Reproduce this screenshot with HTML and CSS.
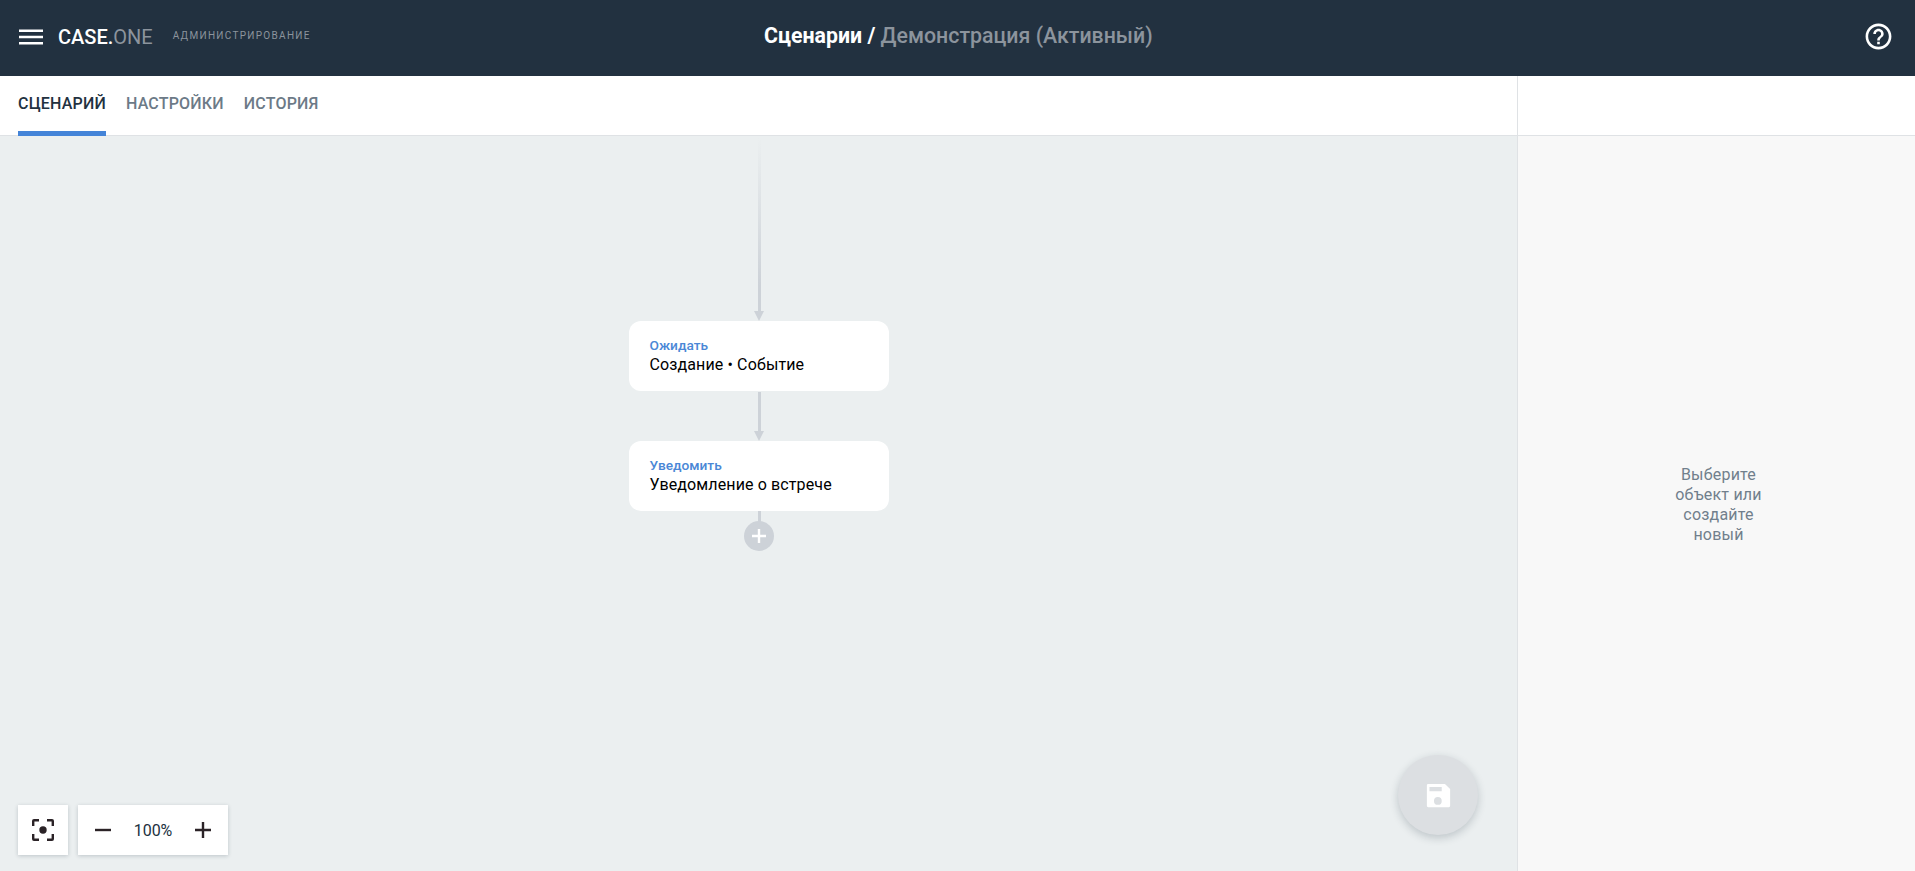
FILE: index.html
```html
<!DOCTYPE html>
<html lang="ru">
<head>
<meta charset="utf-8">
<title>CASE.ONE</title>
<link rel="stylesheet" href="styles.css">
</head>
<body>
<header class="topbar">
  <div class="brand">
    <svg class="menu-icon" viewBox="0 0 24 24" width="24" height="24"><path d="M0 4.5h24V7H0zM0 10.75h24v2.5H0zM0 17h24v2.5H0z" fill="#fff"/></svg>
    <span class="logo"><b>CASE.</b><span class="logo-one">ONE</span></span>
    <span class="logo-sub">АДМИНИСТРИРОВАНИЕ</span>
  </div>
  <h1 class="title"><b>Сценарии /</b> <span class="title-muted">Демонстрация (Активный)</span></h1>
  <svg class="help-icon" viewBox="0 0 24 24" width="31" height="31"><path fill="#fff" d="M11 18h2v-2h-2v2zm1-16C6.48 2 2 6.48 2 12s4.48 10 10 10 10-4.48 10-10S17.52 2 12 2zm0 18c-4.41 0-8-3.59-8-8s3.59-8 8-8 8 3.59 8 8-3.59 8-8 8zm0-14c-2.21 0-4 1.79-4 4h2c0-1.1.9-2 2-2s2 .9 2 2c0 2-3 1.75-3 5h2c0-2.25 3-2.5 3-5 0-2.21-1.79-4-4-4z"/></svg>
</header>
<div class="workspace">
  <main class="editor">
    <nav class="tabs">
      <a class="tab tab-active">СЦЕНАРИЙ</a>
      <a class="tab">НАСТРОЙКИ</a>
      <a class="tab">ИСТОРИЯ</a>
    </nav>
    <section class="canvas">
      <div class="line line-start"></div>
      <div class="arrow arrow-1"></div>
      <div class="node node-1">
        <div class="node-kind">Ожидать</div>
        <div class="node-name">Создание • Событие</div>
      </div>
      <div class="line line-mid"></div>
      <div class="arrow arrow-2"></div>
      <div class="node node-2">
        <div class="node-kind">Уведомить</div>
        <div class="node-name">Уведомление о встрече</div>
      </div>
      <div class="line line-end"></div>
      <div class="add-node">
        <svg viewBox="0 0 14 14" width="14" height="14"><path d="M5.8 0h2.4v5.8H14v2.4H8.200V14H5.800V8.200H0V5.800h5.800z" fill="#fff"/></svg>
      </div>
      <div class="controls">
        <button class="control control-fit">
          <svg viewBox="0 0 24 24" width="24" height="24"><path fill="#2b2327" d="M1 8V3a2 2 0 0 1 2-2h5v2.400H3.400V8zM16 1h5a2 2 0 0 1 2 2v5h-2.400V3.400H16zM1 16h2.400v4.600H8V23H3a2 2 0 0 1-2-2zM20.600 16H23v5a2 2 0 0 1-2 2h-5v-2.400h4.600z"/><circle cx="12" cy="12" r="3.700" fill="#2b2327"/></svg>
        </button>
        <div class="control control-zoom">
          <svg viewBox="0 0 16 16" width="16" height="16"><path d="M0 6.800h16v2.400H0z" fill="#2b2327"/></svg>
          <span class="zoom-value">100%</span>
          <svg viewBox="0 0 16 16" width="16" height="16"><path d="M6.800 0h2.400v6.800H16v2.400H9.200V16H6.800V9.200H0V6.800h6.800z" fill="#2b2327"/></svg>
        </div>
      </div>
      <button class="fab">
        <svg viewBox="0 0 24 24" width="31" height="31"><path fill="#fff" fill-rule="evenodd" d="M17 3H4a1 1 0 0 0-1 1v16a1 1 0 0 0 1 1h16a1 1 0 0 0 1-1V7zM5 5.500h9.500v3.300H5zM11.500 19.200a3 3 0 1 1 0-6 3 3 0 0 1 0 6z"/></svg>
      </button>
    </section>
  </main>
  <aside class="panel">
    <div class="panel-head"></div>
    <div class="panel-body"><p class="panel-hint">Выберите объект или создайте новый</p></div>
  </aside>
</div>
</body>
</html>
```
FILE: styles.css
```css
* { box-sizing: border-box; }
html, body { height: 100%; }
body {
  margin: 0;
  display: flex;
  flex-direction: column;
  height: 871px;
  overflow: hidden;
  font-family: Roboto, "Liberation Sans", sans-serif;
  color: #000;
  background: #fff;
}
.topbar {
  position: relative;
  flex: 0 0 76px;
  display: flex;
  align-items: center;
  justify-content: space-between;
  padding: 0 21px 0 19px;
  background: #223140;
  color: #fff;
}
.brand { display: flex; align-items: center; margin-bottom: 3px; }
.menu-icon { display: block; }
.logo { margin-left: 15px; font-size: 20px; line-height: 24px; }
.logo b { font-weight: 500; }
.logo-one { color: #8c949d; }
.logo-sub {
  margin-left: 20px;
  font-size: 10px;
  line-height: 14px;
  letter-spacing: 1.3px;
  color: #8c949d;
  position: relative;
  top: -1px;
}
.title {
  position: absolute;
  left: 764px;
  top: 22px;
  margin: 0;
  font-size: 21.33px;
  line-height: 28px;
  font-weight: 400;
  white-space: nowrap;
}
.title b { font-weight: 700; }
.title-muted { font-weight: 500; color: #8c949d; }
.help-icon { display: block; margin-bottom: 4px; }
.workspace { flex: 1; display: flex; min-height: 0; }
.editor { flex: 0 0 1517px; display: flex; flex-direction: column; }
.tabs {
  flex: 0 0 60px;
  min-height: 0;
  display: flex;
  gap: 20px;
  padding-left: 18px;
  background: #fff;
  border-bottom: 1px solid #dfe2e5;
}
.tab {
  display: block;
  height: 60px;
  font-size: 16px;
  line-height: 56px;
  font-weight: 500;
  letter-spacing: 0.2px;
  color: #6c7a87;
}
.tab-active { color: #223140; border-bottom: 5px solid #4484d8; }
.canvas {
  position: relative;
  flex: 1;
  background: #ebeff0;
  overflow: hidden;
}
.line { position: absolute; left: 758px; width: 3px; background: #cdd2d8; }
.line-start {
  top: 2px;
  height: 174px;
  background: linear-gradient(to bottom, rgba(205, 210, 216, 0), #cdd2d8 85%);
}
.line-mid { top: 256px; height: 40px; }
.line-end { top: 375px; height: 12px; }
.arrow {
  position: absolute;
  left: 754px;
  width: 0;
  height: 0;
  border-left: 5px solid transparent;
  border-right: 5px solid transparent;
  border-top: 10px solid #cdd2d8;
}
.arrow-1 { top: 175px; }
.arrow-2 { top: 295px; }
.node {
  position: absolute;
  left: 629px;
  width: 260px;
  height: 70px;
  padding: 15px 20.5px;
  background: #fff;
  border-radius: 12px;
}
.node-1 { top: 185px; }
.node-2 { top: 305px; }
.node-kind { font-size: 13.7px; line-height: 18px; font-weight: 500; color: #4a87d6; }
.node-name { margin-top: 1px; font-size: 16px; line-height: 20px; letter-spacing: 0.12px; color: #000; }
.add-node {
  position: absolute;
  left: 744px;
  top: 385px;
  width: 30px;
  height: 30px;
  display: flex;
  align-items: center;
  justify-content: center;
  border-radius: 50%;
  background: #cdd2d8;
}
.controls {
  position: absolute;
  left: 18px;
  bottom: 16px;
  display: flex;
  gap: 10px;
}
.control {
  display: flex;
  align-items: center;
  height: 50px;
  padding: 0;
  border: 0;
  background: #fff;
  box-shadow: 0 1px 4px rgba(34, 49, 64, 0.22);
}
.control-fit { width: 50px; justify-content: center; }
.control-zoom { width: 150px; justify-content: space-between; padding: 0 17px; }
.zoom-value { font-size: 16px; color: #223140; }
.fab {
  position: absolute;
  left: 1398px;
  top: 619px;
  width: 80px;
  height: 80px;
  display: flex;
  align-items: center;
  justify-content: center;
  padding: 0;
  border: 0;
  border-radius: 50%;
  background: #dcdfe2;
  box-shadow: 0 3px 8px rgba(34, 49, 64, 0.22);
}
.panel {
  flex: 1;
  display: flex;
  flex-direction: column;
  border-left: 1px solid #dfe2e5;
}
.panel-head { flex: 0 0 60px; background: #fff; border-bottom: 1px solid #dfe2e5; }
.panel-body {
  flex: 1;
  display: flex;
  align-items: center;
  justify-content: center;
  padding: 2px 0 0 4px;
  background: #f8f8f8;
}
.panel-hint {
  width: 100px;
  margin: 0;
  font-size: 16px;
  line-height: 20px;
  letter-spacing: 0.2px;
  text-align: center;
  color: #717f8c;
}
```
